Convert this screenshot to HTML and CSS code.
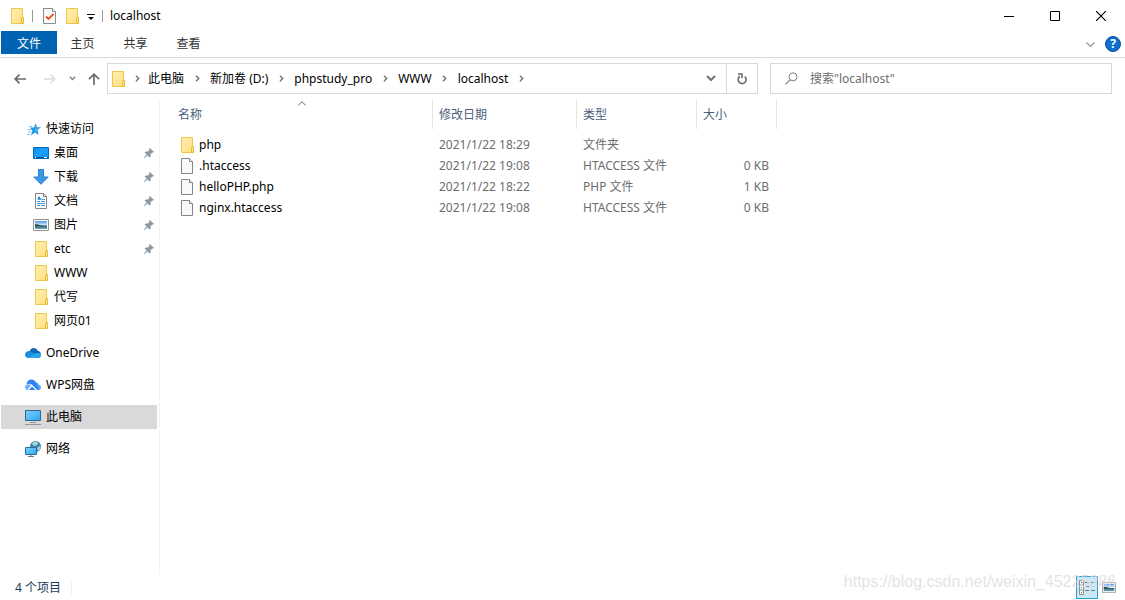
FILE: index.html
```html
<!DOCTYPE html>
<html lang="zh-CN">
<head>
<meta charset="utf-8">
<meta name="viewport" content="width=device-width, initial-scale=1">
<title>localhost</title>
<link rel="stylesheet" href="styles.css">
</head>
<body>
<svg class="sprite" aria-hidden="true">
  <defs>
    <linearGradient id="gFolder" x1="0" y1="0" x2="1" y2="1"><stop offset="0" stop-color="#ffefb0"/><stop offset="1" stop-color="#ffdf80"/></linearGradient>
    <linearGradient id="gScreen" x1="0" y1="0" x2="1" y2="1"><stop offset="0" stop-color="#7fd0fb"/><stop offset="1" stop-color="#2ba8f3"/></linearGradient>
    <linearGradient id="gDesk" x1="0" y1="0" x2="1" y2="1"><stop offset="0" stop-color="#0a90f2"/><stop offset=".5" stop-color="#1ba0fb"/><stop offset="1" stop-color="#0c8ff0"/></linearGradient>
    <linearGradient id="gSky" x1="0" y1="0" x2="0" y2="1"><stop offset="0" stop-color="#4f94ee"/><stop offset=".5" stop-color="#d5ebfb"/><stop offset=".6" stop-color="#35606a"/><stop offset="1" stop-color="#6fa6bd"/></linearGradient>
    <symbol id="folder" viewBox="0 0 14 16" preserveAspectRatio="xMaxYMid"><path d="M.5.5h11v9h1v6h-12z" fill="url(#gFolder)" stroke="#eec64e"/><path d="M10.500 15.500v-5l.5-1h1.500v6z" fill="#ffe389" stroke="#e8bb3c"/></symbol>
    <symbol id="file" viewBox="0 0 12 16"><path d="M.5.5h8l3 3v12h-11z" fill="#f8f9f9" stroke="#858585"/><path d="M8.500.5v3h3" fill="#fff" stroke="#858585"/></symbol>
    <symbol id="pin" viewBox="0 0 10 10"><path d="M6 0l4 4-1 .8-.8-.2-1.700 1.800.1 2-1.100 1-2.100-2L.6 10H0v-.6l2.600-2.900L.7 4.500l.9-1 2.100.1L5.400 1.900 5.200.8z" fill="#8d9aa4"/></symbol>
    <symbol id="crumb" viewBox="0 0 5 7"><path d="M1 .8l2.700 2.700L1 6.200" fill="none" stroke="#777" stroke-width="1.500"/></symbol>
    <symbol id="picture" viewBox="0 0 16 12"><path d="M.5.5h15v11H.5z" fill="#fff" stroke="#949494"/><path d="M2 2h12v8H2z" fill="url(#gSky)"/><path d="M2 5l3 .5L10 7H2z" fill="#285548"/></symbol>
  </defs>
</svg>
<div class="window">
  <header class="titlebar">
    <svg class="ic-folder" aria-hidden="true"><use href="#folder"/></svg>
    <span class="bar"></span>
    <button class="quick" aria-label="属性"><svg width="13" height="16" viewBox="0 0 13 16"><path d="M.5.500h9l3 3v12H.5z" fill="#f7f9fb" stroke="#8b8b8b"/><path d="M9.500.5v3h3" fill="#fff" stroke="#8b8b8b"/><path d="M3 8.500l2.500 2.500L10.500 6" fill="none" stroke="#e8541c" stroke-width="1.800"/></svg></button>
    <button class="quick" aria-label="新建文件夹"><svg class="ic-folder"><use href="#folder"/></svg></button>
    <button class="quick more" aria-label="自定义快速访问工具栏"><svg width="8" height="6" viewBox="0 0 8 6"><path d="M0 0h8v1H0zM1 3h6L4 6z" fill="#111"/></svg></button>
    <span class="bar"></span>
    <h1 class="title">localhost</h1>
    <div class="controls">
      <button aria-label="最小化"><svg width="10" height="10"><path d="M0 5.500h10" stroke="#000"/></svg></button>
      <button aria-label="最大化"><svg width="10" height="10"><path d="M.5.500h9v9h-9z" fill="none" stroke="#000"/></svg></button>
      <button aria-label="关闭"><svg width="10" height="10"><path d="M0 0l10 10M10 0L0 10" stroke="#000" stroke-width="1.200"/></svg></button>
    </div>
  </header>

  <nav class="ribbon">
    <button class="tab file-tab">文件</button>
    <button class="tab">主页</button>
    <button class="tab">共享</button>
    <button class="tab">查看</button>
    <div class="ribbon-end">
      <button aria-label="展开功能区"><svg width="9" height="5" viewBox="0 0 9 5"><path d="M.5.500l4 4 4-4" fill="none" stroke="#999" stroke-width="1.200"/></svg></button>
      <button class="help" aria-label="帮助">?</button>
    </div>
  </nav>

  <div class="address-row">
    <div class="history">
      <button aria-label="返回"><svg width="12" height="10" viewBox="0 0 12 10"><path d="M12 5H1.200M5.500.7L1.200 5l4.300 4.300" fill="none" stroke="#6b6b6b" stroke-width="1.700"/></svg></button>
      <button aria-label="前进"><svg width="12" height="10" viewBox="0 0 12 10"><path d="M0 5h10.800M6.500.7L10.800 5 6.500 9.300" fill="none" stroke="#dcdcdc" stroke-width="1.500"/></svg></button>
      <button class="recent" aria-label="最近浏览的位置"><svg width="7" height="5" viewBox="0 0 7 5"><path d="M.8.800l2.700 2.700L6.200.8" fill="none" stroke="#808080" stroke-width="1.400"/></svg></button>
      <button class="up" aria-label="上移"><svg width="12" height="12" viewBox="0 0 12 12"><path d="M6 12V1.200M1 6.200l5-5 5 5" fill="none" stroke="#6b6b6b" stroke-width="1.700"/></svg></button>
    </div>
    <div class="address">
      <svg class="ic-folder" aria-hidden="true"><use href="#folder"/></svg>
      <span class="sep first"><svg><use href="#crumb"/></svg></span>
      <button>此电脑</button><span class="sep"><svg><use href="#crumb"/></svg></span>
      <button>新加卷 (D:)</button><span class="sep"><svg><use href="#crumb"/></svg></span>
      <button>phpstudy_pro</button><span class="sep"><svg><use href="#crumb"/></svg></span>
      <button>WWW</button><span class="sep"><svg><use href="#crumb"/></svg></span>
      <button>localhost</button><span class="sep"><svg><use href="#crumb"/></svg></span>
      <button class="drop" aria-label="以前的位置"><svg width="10" height="7" viewBox="0 0 10 7"><path d="M1 1l4 4 4-4" fill="none" stroke="#737373" stroke-width="2"/></svg></button>
      <button class="refresh" aria-label="刷新"><svg width="10" height="12" viewBox="0 0 10 12"><path d="M7.800 3.600A4 4 0 1 1 3 3.200" fill="none" stroke="#6b6b6b" stroke-width="1.600"/><path d="M1 1h4v4" fill="none" stroke="#6b6b6b" stroke-width="1.600"/></svg></button>
    </div>
    <label class="search">
      <svg width="13" height="13" viewBox="0 0 13 13" aria-hidden="true"><circle cx="8" cy="4.800" r="4" fill="none" stroke="#808080"/><path d="M5 7.800L.5 12.300" stroke="#808080" stroke-width="1.200"/></svg>
      <input type="text" placeholder='搜索"localhost"' aria-label="搜索">
    </label>
  </div>

  <div class="body">
    <aside class="sidebar">
      <ul class="tree">
        <li class="node root"><svg class="star" viewBox="0 0 14 13"><path d="M8.800 0l1 4.200H14l-3.500 2.900 1.200 4.900-3.800-2.400L4 12.500l1.400-4.900L3 4.500l4 .1z" fill="#2196e3"/><path d="M8.400 2.500l.6 2.700h2.400L9.300 7l.7 2.700-2.200-1.500z" fill="#45b4f5"/><path d="M2 3.500h3M1 6.500h4M1 9h3.500M0 11.500h3" stroke="#4aa9e4" stroke-width=".7"/></svg><a href="#">快速访问</a></li>
        <li class="node"><svg class="ic16" viewBox="0 0 16 16"><path d="M.5 2.500h15v11H.5z" fill="url(#gDesk)" stroke="#0569bb"/><path d="M1 12.500h14" stroke="#06559c"/><path d="M2 12.500h1M11 12.500h3" stroke="#fff"/></svg><a href="#">桌面</a><svg class="ic-pin"><use href="#pin"/></svg></li>
        <li class="node"><svg class="ic16" viewBox="0 0 16 16"><path d="M5.500.5h5V8h4.700L8 15.300.8 8h4.700z" fill="#3a98e8" stroke="#2b7fcb"/></svg><a href="#">下载</a><svg class="ic-pin"><use href="#pin"/></svg></li>
        <li class="node"><svg class="ic16" viewBox="0 0 16 16"><path d="M2.500.5h8l3 3v12h-11z" fill="#fff" stroke="#858585"/><path d="M10.500.5v3h3" fill="none" stroke="#858585"/><path d="M5 4.500h2M4.500 6h4" stroke="#2b87cf" stroke-width="1.500"/><path d="M9 6.500h3M4 8.500h3M8 8.500h4M4 10.500h8M4 12.500h3M8 12.500h4" stroke="#3f9adc"/></svg><a href="#">文档</a><svg class="ic-pin"><use href="#pin"/></svg></li>
        <li class="node"><svg class="ic16"><use href="#picture"/></svg><a href="#">图片</a><svg class="ic-pin"><use href="#pin"/></svg></li>
        <li class="node"><svg class="ic16"><use href="#folder"/></svg><a href="#">etc</a><svg class="ic-pin"><use href="#pin"/></svg></li>
        <li class="node"><svg class="ic16"><use href="#folder"/></svg><a href="#">WWW</a></li>
        <li class="node"><svg class="ic16"><use href="#folder"/></svg><a href="#">代写</a></li>
        <li class="node"><svg class="ic16"><use href="#folder"/></svg><a href="#">网页01</a></li>
      </ul>
      <ul class="tree"><li class="node root"><svg class="ic16" viewBox="0 0 16 16"><path d="M4.500 6.500C5 4.300 6.700 3 8.700 3c1.900 0 3.300 1 4 2.700C14.700 6 16 7.500 16 9.500L9 11z" fill="#1066b8"/><path d="M3.500 13C1.500 13 0 11.500 0 9.700 0 7.600 1.800 6 4 6c1.300 0 2.200.4 3 1l6 4-1 2z" fill="#1a8fe0"/><path d="M3 13l6.500-4.200c1.800-1.200 6-1.300 6.500 1.400.2 1.600-1 2.800-2.700 2.800z" fill="#28a8ea"/></svg><a href="#">OneDrive</a></li></ul>
      <ul class="tree"><li class="node root"><svg class="ic16" viewBox="0 0 16 16"><path d="M10 5.300c2.200-.4 3.600 1 3.700 2.300 1.400.4 2.300 1.400 2.300 2.800 0 1.200-.8 2.600-2.500 2.600z" fill="#5ba8fb"/><path d="M1.500 7.500C1.800 4 4 2.500 6.500 2.500c2 0 3.400 1 4.200 2.800l3.800 7.400c-1 .6-2.300.2-3-.5L6.800 7.600C5 6.300 3.500 6.500 1.500 7.500z" fill="#2b83f6"/><path d="M0 10.500C0 8.300 2 7.200 3.700 7.300c.9 0 1.700.4 2.300 1L2.500 13C1 13 0 12 0 10.500z" fill="#69b1fc"/><path d="M4 13l3-3.500 3.500 3.500z" fill="#2b83f6"/></svg><a href="#">WPS网盘</a></li></ul>
      <ul class="tree"><li class="node root selected"><svg class="ic16" viewBox="0 0 16 16"><path d="M.5 1.500h15v10H.5z" fill="url(#gScreen)" stroke="#30688c"/><path d="M5 13.500h6M0 15.500h16" stroke="#8798ac"/></svg><a href="#">此电脑</a></li></ul>
      <ul class="tree"><li class="node root"><svg class="ic16" viewBox="0 0 16 16"><circle cx="10.500" cy="5.500" r="5.500" fill="#4486a5"/><path d="M7 3c1-2 3-2.500 5-2l1 2-3 2-2-1zM12 7l3-2 .5 2-2 3z" fill="#a9d6e5"/><path d="M.5 6.500h11v7H.5z" fill="url(#gScreen)" stroke="#286f9d"/><path d="M6 14v1M3 15.500h6" stroke="#5c7c95"/></svg><a href="#">网络</a></li></ul>
    </aside>

    <main class="content">
      <table class="files">
        <colgroup><col class="c-name"><col class="c-date"><col class="c-type"><col class="c-size"></colgroup>
        <thead><tr>
          <th class="sorted" aria-sort="ascending">名称<svg class="sort" width="9" height="5" viewBox="0 0 9 5" aria-hidden="true"><path d="M.7 4.500l3.800-3.800 3.800 3.800" fill="none" stroke="#666"/></svg></th>
          <th>修改日期</th><th>类型</th><th>大小</th>
        </tr></thead>
        <tbody>
          <tr><td><span class="name"><svg class="ic-folder"><use href="#folder"/></svg>php</span></td><td>2021/1/22 18:29</td><td>文件夹</td><td class="size"></td></tr>
          <tr><td><span class="name"><svg class="ic-file"><use href="#file"/></svg>.htaccess</span></td><td>2021/1/22 19:08</td><td>HTACCESS 文件</td><td class="size">0 KB</td></tr>
          <tr><td><span class="name"><svg class="ic-file"><use href="#file"/></svg>helloPHP.php</span></td><td>2021/1/22 18:22</td><td>PHP 文件</td><td class="size">1 KB</td></tr>
          <tr><td><span class="name"><svg class="ic-file"><use href="#file"/></svg>nginx.htaccess</span></td><td>2021/1/22 19:08</td><td>HTACCESS 文件</td><td class="size">0 KB</td></tr>
        </tbody>
      </table>
    </main>
  </div>

  <footer class="status">
    <span class="count">4 个项目</span>
    <div class="views">
      <button class="view active" aria-label="详细信息"><svg width="18" height="15" viewBox="0 0 18 15"><path d="M1.500.5h4v14h-4zM1.500 5h4M1.500 10h4" fill="#fff" stroke="#8c8c8c"/><path d="M3 2h1v1H3z" fill="#555"/><path d="M3 7h1v1H3z" fill="#3484cf"/><path d="M3 12h1v1H3z" fill="#d33"/><path d="M7 2.500h4M13 2.500h4M7 6.500h4M13 6.500h4M7 10.500h4M13 10.500h4" stroke="#777"/></svg></button>
      <button class="view" aria-label="大缩略图"><svg width="14" height="11"><use href="#picture"/></svg></button>
    </div>
    <span class="watermark">https://blog.csdn.net/weixin_45225286</span>
  </footer>
</div>
</body>
</html>
```
FILE: styles.css
```css
* { box-sizing: border-box; }
body {
  margin: 0;
  background: #fff;
  color: #000;
  font: 12px/20px "Noto Sans", "Noto Sans CJK SC", sans-serif;
}
button {
  display: flex;
  align-items: center;
  justify-content: center;
  padding: 0;
  border: 0;
  background: none;
  color: inherit;
  font: inherit;
  white-space: nowrap;
}
a { color: inherit; text-decoration: none; }
svg { display: block; flex: none; }
.sprite { position: absolute; width: 0; height: 0; }
.window { display: flex; flex-direction: column; min-height: 100vh; }
.ic-folder { width: 14px; height: 16px; }
.ic-file { width: 12px; height: 16px; margin-right: 2px; }
.ic16 { width: 16px; height: 16px; }

.titlebar { display: flex; align-items: center; height: 31px; padding-left: 11px; }
.bar { width: 1px; height: 12px; margin: 0 7px; background: #999; }
.titlebar .quick { margin-left: 3px; margin-right: 7px; }
.titlebar .quick + .quick { margin-left: 3px; }
.titlebar .quick.more { margin: 3px 0 0; }
.title { margin: 0; font-size: 12px; font-weight: 400; }
.controls { display: flex; margin-left: auto; padding-right: 1px; }
.controls button { width: 46px; height: 30px; }

.ribbon {
  display: flex;
  height: 27px;
  padding-left: 1px;
  border-bottom: 1px solid #dadbdc;
  color: #333;
}
.tab { width: 53px; height: 23px; padding: 2px 2px 0 0; }
.file-tab { width: 56px; padding-right: 0; background: #0063b1; color: #fff; }
.ribbon-end { display: flex; align-items: center; gap: 10px; margin-left: auto; padding-right: 4px; }
.help {
  width: 16px;
  height: 16px;
  border: 1px solid #07509c;
  border-radius: 50%;
  background: #0f6fcf;
  color: #fff;
  font-weight: 700;
}

.address-row {
  display: grid;
  grid-template-columns: 93px minmax(0, 651fr) minmax(0, 354fr);
  padding: 5px 13px 6px 14px;
}
.history { display: flex; align-items: center; }
.history button { width: 12px; height: 24px; margin-right: 18px; }
.history button + button { margin-right: 12px; }
.history .recent { width: 8px; }
.history button.recent + .up { margin: 0; }
.address {
  display: flex;
  align-items: center;
  height: 31px;
  padding-left: 4px;
  border: 1px solid #d9d9d9;
}
.sep { display: flex; justify-content: center; width: 26px; }
.sep.first { width: 22px; }
.sep svg { width: 5px; height: 7px; }
.drop { width: 30px; margin-left: auto; }
.refresh { align-self: stretch; width: 31px; border-left: 1px solid #d9d9d9; }
.search {
  display: flex;
  align-items: center;
  gap: 12px;
  margin-left: 12px;
  padding-left: 14px;
  border: 1px solid #d9d9d9;
}
.search input {
  flex: 1;
  min-width: 0;
  padding: 0;
  border: 0;
  outline: 0;
  background: none;
  font: inherit;
}
.search input::placeholder { color: #6d6d6d; opacity: 1; }

.body { display: flex; flex: 1; }
.sidebar {
  display: flex;
  flex-direction: column;
  gap: 8px;
  width: 160px;
  padding: 17px 2px 0 1px;
  border-right: 1px solid #f3f3f3;
}
.tree { margin: 0; padding: 0; list-style: none; }
.node { display: flex; align-items: center; gap: 5px; height: 24px; padding: 0 3px 0 32px; }
.node.root { padding-left: 24px; }
.node.selected { background: #d9d9d9; }
.star { width: 14px; height: 13px; margin-left: 2px; }
.ic-pin { width: 10px; height: 10px; margin-left: auto; }

.content { flex: 1; padding: 0 12px; }
.files { border-collapse: separate; border-spacing: 0; table-layout: fixed; width: 605px; }
.c-name { width: 261px; }
.c-date { width: 144px; }
.c-type { width: 120px; }
.c-size { width: 80px; }
.files th {
  position: relative;
  height: 29px;
  padding: 0 6px;
  border-right: 1px solid #e5e5e5;
  color: #4c607a;
  font-weight: 400;
  text-align: left;
}
.sort { position: absolute; top: 1px; left: 50%; transform: translateX(-50%); }
.files tbody::before { content: ""; display: block; height: 5px; }
.files td { height: 21px; padding: 0 6px; color: #6d6d6d; white-space: nowrap; }
.name { display: flex; align-items: center; gap: 4px; padding-left: 3px; color: #000; }
.files .size { padding-right: 8px; text-align: right; }

.status { position: relative; display: flex; align-items: center; height: 25px; padding: 0 5px 0 15px; color: #1e395b; }
.count { padding-right: 10px; border-right: 1px solid #eee; line-height: 12px; }
.views { display: flex; align-items: center; margin-left: auto; }
.view { width: 22px; height: 23px; }
.view.active { border: 1px solid #26a0da; background: #cbe8f6; }
.watermark {
  position: absolute;
  right: 9px;
  top: 0;
  color: rgba(222, 222, 222, .85);
  font: 16px/14px "Liberation Sans", Arial, sans-serif;
  pointer-events: none;
}
```
